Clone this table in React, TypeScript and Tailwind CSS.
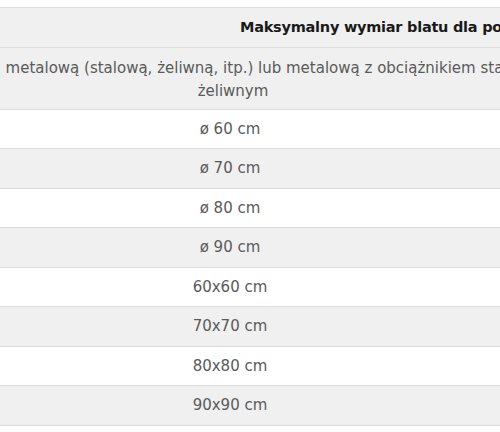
import React from "react";

const rows = [
  { label: "ø 60 cm", alt: false, h: "h-[39px]" },
  { label: "ø 70 cm", alt: true, h: "h-[40px]" },
  { label: "ø 80 cm", alt: false, h: "h-[39px]" },
  { label: "ø 90 cm", alt: true, h: "h-[40px]" },
  { label: "60x60 cm", alt: false, h: "h-[39px]" },
  { label: "70x70 cm", alt: true, h: "h-[40px]" },
  { label: "80x80 cm", alt: false, h: "h-[39px]" },
  { label: "90x90 cm", alt: true, h: "h-[40px]" },
];

export default function App() {
  return (
    <div
      className="w-[500px] h-[432px] overflow-hidden bg-white pt-[7px]"
      style={{ fontFamily: '"DejaVu Sans", Verdana, sans-serif' }}
    >
      <div className="w-[1000px] ml-[-270px] text-[15px] text-[#5a5a5a] border-b border-[#dcdcdc]">
        <div className="h-[40px] border-t border-[#dcdcdc] bg-[#f0f0f0] flex items-center pl-[510px] font-bold text-[14.5px] tracking-[-0.25px] text-[#1a1a1a] whitespace-nowrap">
          Maksymalny wymiar blatu dla podstawy
        </div>
        <div className="h-[62px] border-t border-[#dcdcdc] bg-[#f0f0f0] flex flex-col items-center justify-center leading-[23px] text-center pt-[3px]">
          <span className="whitespace-nowrap pl-[36px]">
            z podstawą metalową (stalową, żeliwną, itp.) lub metalową z obciążnikiem stalowym lub
          </span>
          <span className="whitespace-nowrap pl-[6px]">żeliwnym</span>
        </div>
        {rows.map((r) => (
          <div
            key={r.label}
            className={`${r.h} border-t border-[#dcdcdc] flex items-center justify-center ${
              r.alt ? "bg-[#f0f0f0]" : "bg-white"
            }`}
          >
            {r.label}
          </div>
        ))}
      </div>
    </div>
  );
}
